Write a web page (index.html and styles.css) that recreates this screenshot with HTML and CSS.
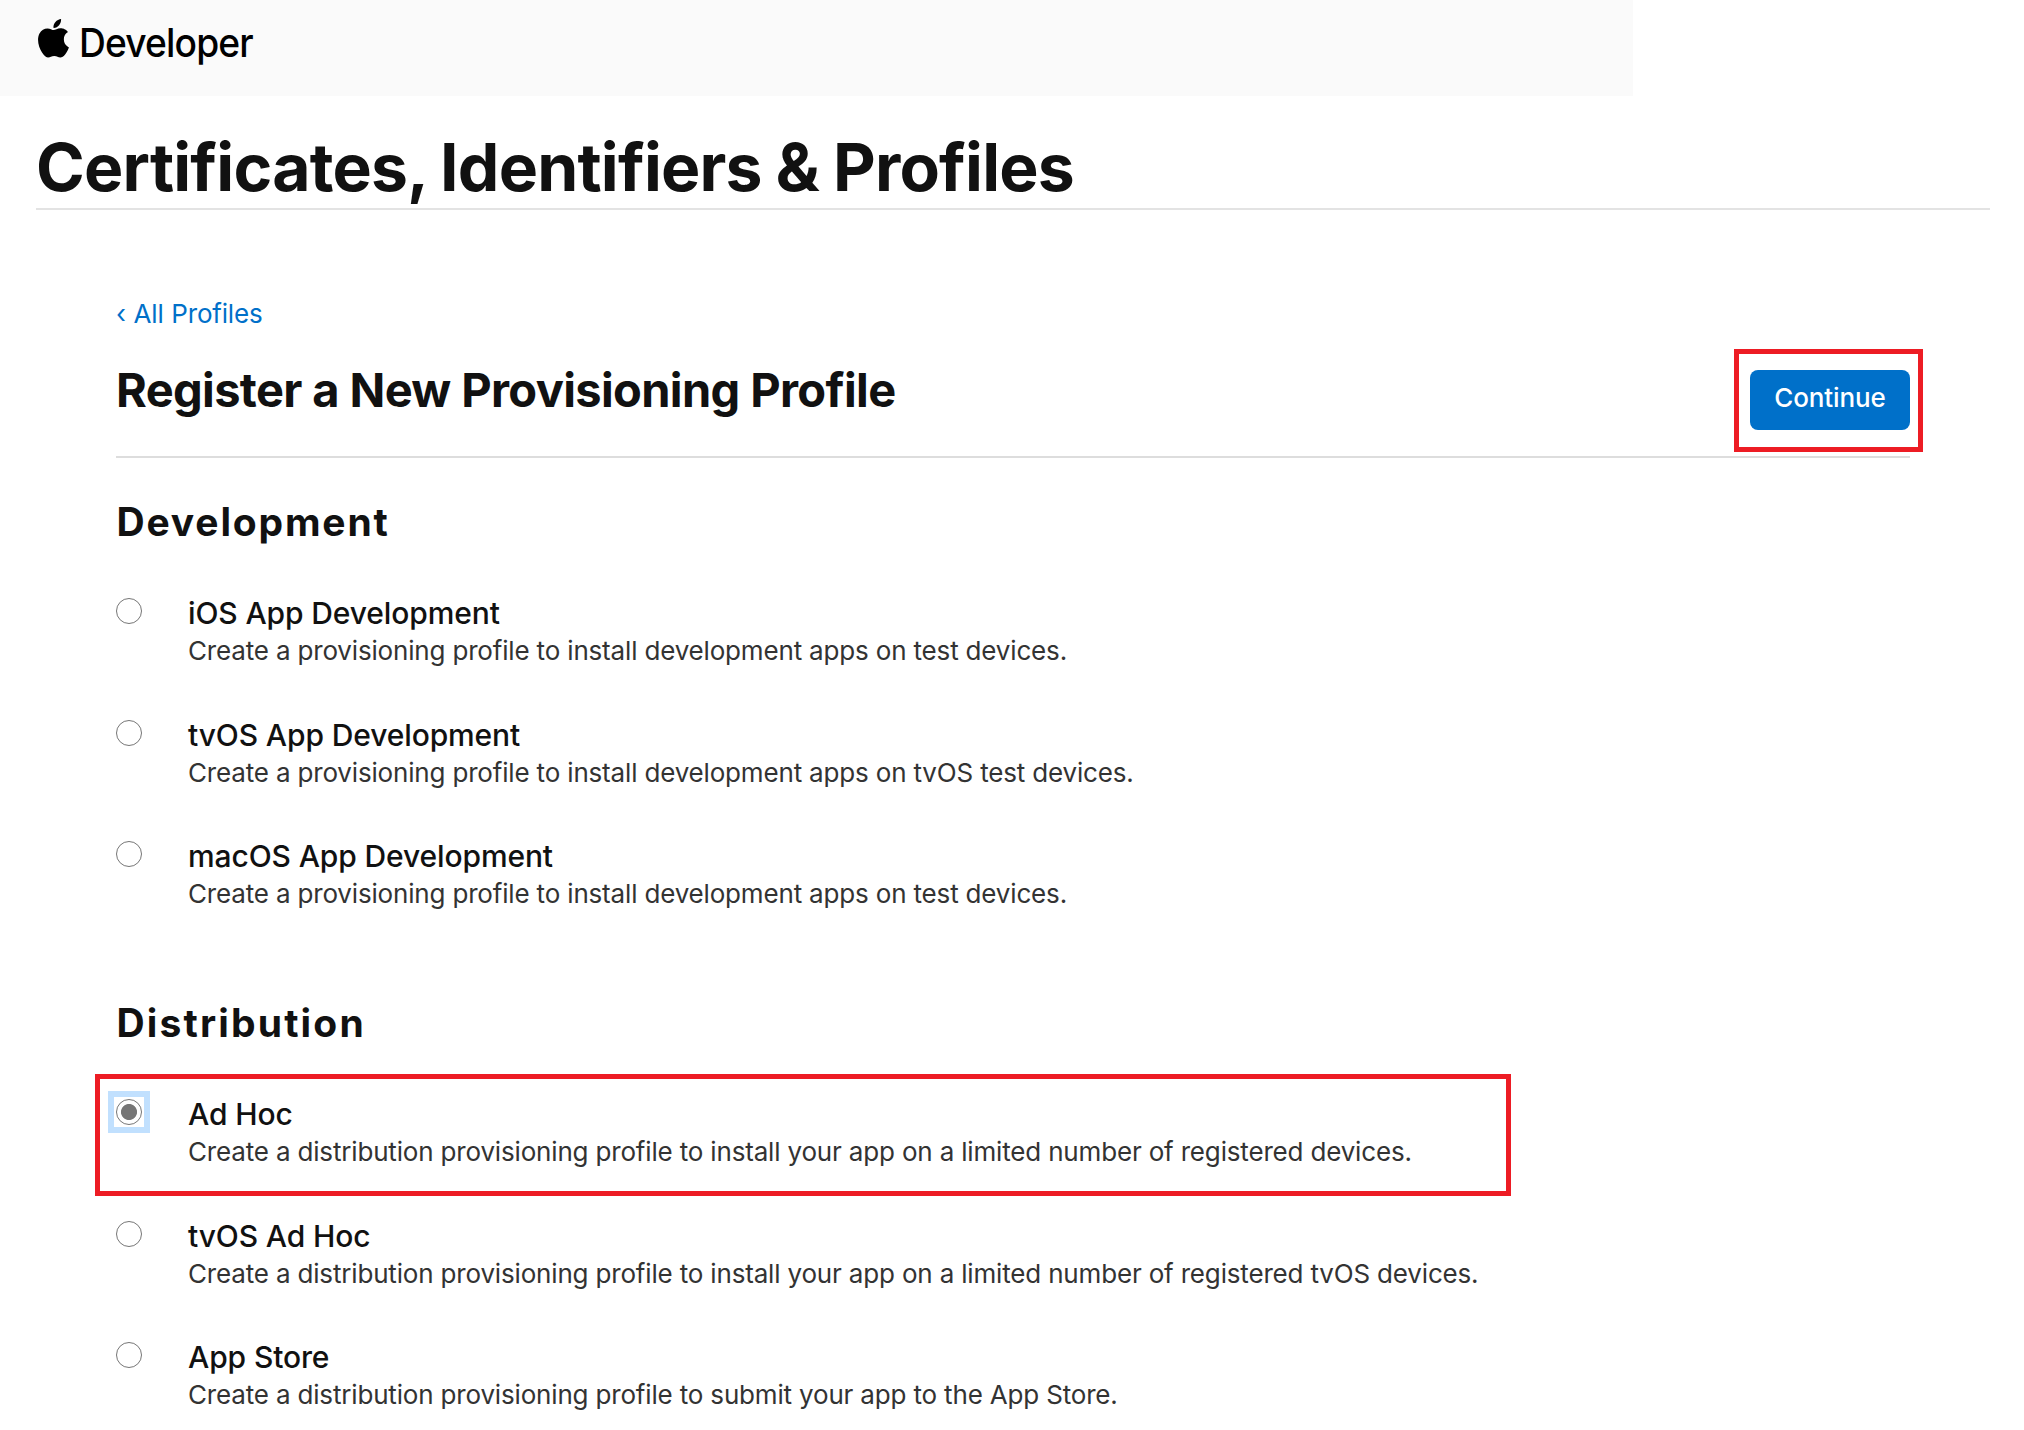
FILE: index.html
```html
<!DOCTYPE html>
<html lang="en">
<head>
<meta charset="utf-8">
<title>Certificates, Identifiers &amp; Profiles - Apple Developer</title>
<link rel="stylesheet" href="styles.css">
</head>
<body>
<header class="site-header">
  <svg class="logo" viewBox="2.2 0 19.6 24" preserveAspectRatio="none" aria-hidden="true"><path d="M12.152 6.896c-.948 0-2.415-1.078-3.96-1.04-2.04.027-3.91 1.183-4.961 3.014-2.117 3.675-.546 9.103 1.519 12.09 1.013 1.454 2.208 3.09 3.792 3.039 1.52-.065 2.09-.987 3.935-.987 1.831 0 2.35.987 3.96.948 1.637-.026 2.676-1.48 3.676-2.948 1.156-1.688 1.636-3.325 1.662-3.415-.039-.013-3.182-1.221-3.22-4.857-.026-3.04 2.48-4.494 2.597-4.559-1.429-2.09-3.623-2.324-4.39-2.376-2-.156-3.675 1.09-4.61 1.09zM15.53 3.83c.843-1.012 1.4-2.427 1.245-3.83-1.207.052-2.662.805-3.532 1.818-.78.896-1.454 2.338-1.273 3.714 1.338.104 2.715-.688 3.559-1.701"/></svg>
  <span class="brand">Developer</span>
</header>
<h1 class="page-title">Certificates, Identifiers &amp; Profiles</h1>
<main class="content">
  <a class="back">‹ All Profiles</a>
  <div class="toolbar">
    <h2 class="heading">Register a New Provisioning Profile</h2>
    <div class="action">
      <button class="continue" type="button">Continue</button>
      <div class="callout callout-action"></div>
    </div>
  </div>
  <section class="group">
    <h3 class="group-title">Development</h3>
    <div class="options">
      <label class="option"><span class="control"><span class="radio"></span></span><span class="text"><span class="name">iOS App Development</span><span class="desc">Create a provisioning profile to install development apps on test devices.</span></span></label>
      <label class="option"><span class="control"><span class="radio"></span></span><span class="text"><span class="name">tvOS App Development</span><span class="desc">Create a provisioning profile to install development apps on tvOS test devices.</span></span></label>
      <label class="option"><span class="control"><span class="radio"></span></span><span class="text"><span class="name">macOS App Development</span><span class="desc">Create a provisioning profile to install development apps on test devices.</span></span></label>
    </div>
  </section>
  <section class="group">
    <h3 class="group-title distribution">Distribution</h3>
    <div class="options">
      <label class="option"><span class="control focused"><span class="radio checked"></span></span><span class="text"><span class="name">Ad Hoc</span><span class="desc">Create a distribution provisioning profile to install your app on a limited number of registered devices.</span></span><span class="callout callout-option"></span></label>
      <label class="option"><span class="control"><span class="radio"></span></span><span class="text"><span class="name">tvOS Ad Hoc</span><span class="desc">Create a distribution provisioning profile to install your app on a limited number of registered tvOS devices.</span></span></label>
      <label class="option"><span class="control"><span class="radio"></span></span><span class="text"><span class="name">App Store</span><span class="desc">Create a distribution provisioning profile to submit your app to the App Store.</span></span></label>
    </div>
  </section>
</main>
</body>
</html>
```
FILE: styles.css
```css
* { box-sizing: border-box; }
body {
  margin: 0;
  height: 1430px;
  overflow: hidden;
  background: #fff;
  color: #111;
  font-family: Inter, "Liberation Sans", sans-serif;
}
h1, h2, h3 { margin: 0; font-weight: 700; white-space: nowrap; }

.site-header {
  display: flex;
  align-items: flex-start;
  width: 1633px;
  height: 96px;
  padding: 19px 0 0 38px;
  background: #fafafa;
  color: #000;
}
.logo { width: 31px; height: 38.5px; fill: #000; }
.brand {
  margin: 4px 0 0 10px;
  font-size: 40px;
  line-height: 40px;
  font-weight: 500;
  letter-spacing: -0.92px;
  transform: scaleX(0.93);
  transform-origin: left;
}

.page-title {
  margin: 35px 34px 0 36px;
  padding-bottom: 5px;
  border-bottom: 2px solid #e3e3e3;
  font-size: 66px;
  line-height: 72px;
  letter-spacing: -0.8px;
  word-spacing: -1px;
}

.content { margin: 88px 114px 0 116px; }
.back {
  display: block;
  color: #0070c9;
  font-size: 26px;
  line-height: 32px;
  letter-spacing: -0.2px;
  word-spacing: 0.7px;
}
.toolbar {
  display: flex;
  justify-content: space-between;
  align-items: flex-start;
  height: 96px;
  margin-top: 32px;
  border-bottom: 2px solid #ddd;
}
.heading { font-size: 47px; line-height: 56px; letter-spacing: -0.64px; }
.action { position: relative; margin-top: 8px; }
.continue {
  display: block;
  width: 160px;
  height: 60px;
  padding: 12px 0 16px;
  border: 0;
  border-radius: 8px;
  background: #0070c9;
  color: #fff;
  font: 500 26px/32px Inter, "Liberation Sans", sans-serif;
  letter-spacing: -0.1px;
}
.callout { position: absolute; border: 5px solid #ed1c24; pointer-events: none; }
.callout-action { left: -16px; top: -21px; width: 189px; height: 103px; }
.callout-option { left: -21px; top: -21px; width: 1416px; height: 122px; }

.group { margin-top: 40px; }
.group + .group { margin-top: 88px; }
.group-title { font-size: 39px; line-height: 48px; letter-spacing: 1.82px; text-indent: 0.5px; }
.group-title.distribution { letter-spacing: 2.15px; }
.options { display: grid; gap: 47.6px; margin-top: 48px; }
.option { position: relative; display: flex; align-items: flex-start; height: 74px; }
.control { flex: none; width: 26px; height: 26px; margin: 4px 46px 0 0; }
.control.focused { outline: 6px solid #c1e0fe; outline-offset: 2px; }
.radio {
  display: block;
  width: 26px;
  height: 26px;
  border: 1px solid #767676;
  border-radius: 50%;
}
.radio.checked { background: radial-gradient(circle, #767676 7.6px, #fff 8.4px); }
.text { display: flex; flex-direction: column; gap: 2px; white-space: nowrap; }
.name { font-size: 30px; line-height: 38px; font-weight: 500; letter-spacing: -0.12px; }
.desc { color: #333; font-size: 26px; line-height: 34px; letter-spacing: -0.17px; }
```
